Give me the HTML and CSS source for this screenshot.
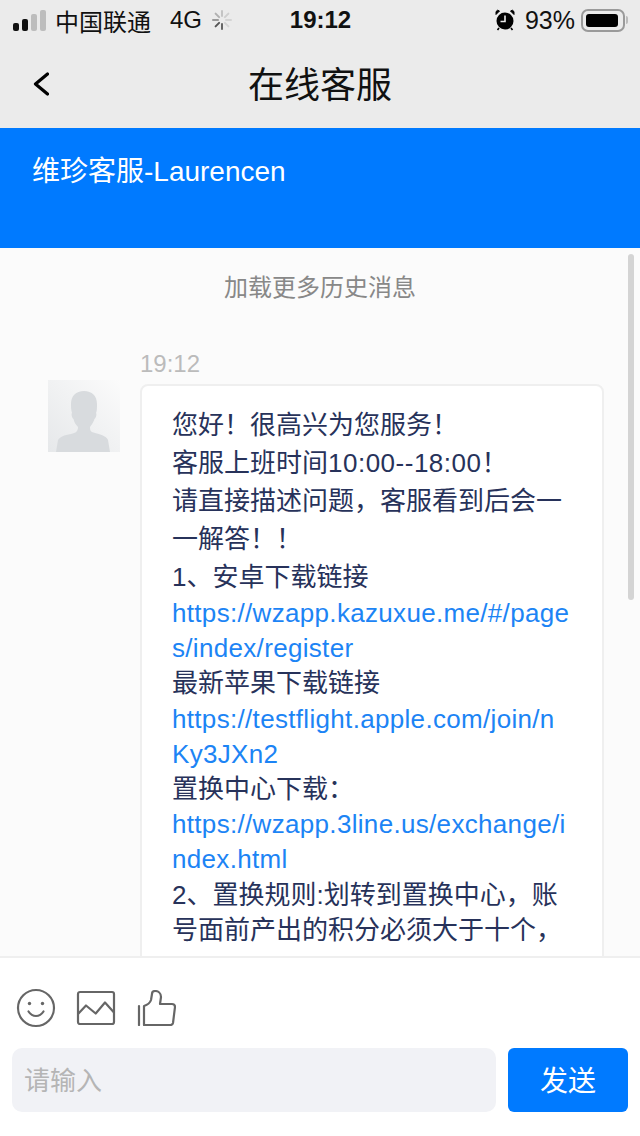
FILE: index.html
```html
<!DOCTYPE html>
<html lang="zh">
  <head>
    <meta charset="utf-8" />
    <meta name="viewport" content="width=device-width, initial-scale=1" />
    <title>在线客服</title>
    <link rel="stylesheet" href="styles.css">
  </head>
  <body>
    <div class="status-bar">
      <div class="status-left">
        <div class="signal">
          <i class="bar b1"></i><i class="bar b2"></i><i class="bar b3 off"></i><i class="bar b4 off"></i>
        </div>
        <span class="carrier">中国联通</span>
        <span class="net">4G</span>
        <svg class="spinner" width="20" height="20" viewBox="0 0 20 20" fill="none" stroke-width="2" stroke-linecap="round">
          <path d="M10 1v5" stroke="#c4c4c4"/>
          <path d="M16.4 3.6l-3.5 3.5" stroke="#cfcfcf"/>
          <path d="M19 10h-5" stroke="#d4d4d4"/>
          <path d="M16.4 16.4l-3.5-3.5" stroke="#d4d4d4"/>
          <path d="M10 19v-5" stroke="#666"/>
          <path d="M3.6 16.4l3.5-3.5" stroke="#555"/>
          <path d="M1 10h5" stroke="#999"/>
          <path d="M3.6 3.6l3.5 3.5" stroke="#b0b0b0"/>
        </svg>
      </div>
      <div class="status-time">19:12</div>
      <div class="status-right">
        <svg class="alarm" width="20" height="22" viewBox="0 0 20 22">
          <circle cx="10" cy="12" r="8.5" fill="#000"/>
          <path d="M10 6.5V12.5H5.5" fill="none" stroke="#ebebeb" stroke-width="1.6"/>
          <path d="M1 5.5 4.5 2 2.6 1.2 1 2.6ZM19 5.5 15.500 2 17.400 1.200 19 2.600Z" fill="#000" stroke="#000"/>
          <path d="M4 19l-1.500 2M16 19l1.500 2" stroke="#000" stroke-width="1.600"/>
        </svg>
        <span class="battery-pct">93%</span>
        <div class="battery"><div class="battery-fill"></div></div>
        <div class="battery-cap"></div>
      </div>
    </div>

    <header class="nav">
      <svg class="back" width="16" height="24" viewBox="0 0 16 24" fill="none" stroke="#000" stroke-width="3.200" stroke-linecap="round" stroke-linejoin="round">
        <path d="M14.500 2 2.500 12 14.500 22"/>
      </svg>
      <h1 class="nav-title">在线客服</h1>
    </header>

    <div class="agent-bar">维珍客服-Laurencen</div>

    <main class="chat">
      <div class="scrollbar"></div>
      <div class="load-more">加载更多历史消息</div>
      <div class="msg-time">19:12</div>
      <div class="msg">
        <div class="avatar">
          <svg width="72" height="72" viewBox="0 0 72 72">
            <defs>
              <linearGradient id="avatar-bg" x1="1" y1="0" x2="0" y2="1">
                <stop offset="0" stop-color="#fbfbfb"/>
                <stop offset="1" stop-color="#e6e8ea"/>
              </linearGradient>
            </defs>
            <rect width="72" height="72" fill="url(#avatar-bg)"/>
            <path d="M36 11c8 0 13 5 13 13 0 3 0 7-1 9 1 1 0 5-1.500 6-1 3-3 6-4.500 8 0 4 1 5 5 6 8 2 12 4 13 7l2 12H8l2-12c2-3 6-5 13-6 5-1 7-3 7-7-2-2-4-5-4.500-8-1.500-1-2.500-5-1.500-6-1-3-1-6-1-9 0-8 5-13 13-13Z" fill="#d8dbde"/>
          </svg>
        </div>
        <div class="bubble">
          <p class="cn">您好！很高兴为您服务！</p>
          <p class="cn">客服上班时间<span class="latin">10:00--18:00</span>！</p>
          <p class="cn">请直接描述问题，客服看到后会一一解答！！</p>
          <p class="cn">1、安卓下载链接</p>
          <p class="en"><a href="#">https://wzapp.kazuxue.me/#/pages/index/register</a></p>
          <p class="en">最新苹果下载链接</p>
          <p class="en"><a href="#">https://testflight.apple.com/join/nKy3JXn2</a></p>
          <p class="en">置换中心下载：</p>
          <p class="en"><a href="#">https://wzapp.3line.us/exchange/index.html</a></p>
          <p class="en">2、置换规则:划转到置换中心，账号面前产出的积分必须大于十个，</p>
        </div>
      </div>
    </main>

    <footer class="composer">
      <div class="tools">
        <svg width="40" height="40" viewBox="0 0 40 40" fill="none" stroke="#666" stroke-width="2.200" stroke-linecap="round">
          <circle cx="20" cy="20" r="18"/>
          <circle cx="13.500" cy="15.500" r="1.700" fill="#666" stroke="none"/>
          <circle cx="26.500" cy="15.500" r="1.700" fill="#666" stroke="none"/>
          <path d="M12.500 23.500c2 3 4.500 4.500 7.500 4.500s5.500-1.500 7.500-4.500"/>
        </svg>
        <svg width="40" height="36" viewBox="0 0 40 36" fill="none" stroke="#666" stroke-width="2.200" stroke-linejoin="round">
          <rect x="2" y="2" width="36" height="32" rx="2"/>
          <path d="M2 24 10 15.500l9.700 8L29 12.500 38 22.500"/>
        </svg>
        <svg width="40" height="36" viewBox="0 0 40 36" fill="none" stroke="#666" stroke-width="2.200" stroke-linejoin="round" stroke-linecap="round">
          <path d="M3 16v19"/>
          <path d="M8 35V16c3-1 6-3 7-6l1-6c0-2 1-3 3-3 3 0 6 2 6 6l-1 7H36c2 0 3 1.500 3 3L37 33c-.3 1.500-1 2-2.500 2Z"/>
        </svg>
      </div>
      <div class="input-row">
        <div class="input">请输入</div>
        <div class="send">发送</div>
      </div>
    </footer>
  </body>
</html>
```

FILE: styles.css
```css
* {
  margin: 0;
  padding: 0;
  box-sizing: border-box;
}

html,
body {
  height: 100%;
}

body {
  display: flex;
  flex-direction: column;
  height: 1136px;
  overflow: hidden;
  background: #fff;
  font-family: "Liberation Sans", "Noto Sans CJK SC", sans-serif;
}

.status-bar {
  display: flex;
  align-items: center;
  justify-content: space-between;
  height: 40px;
  padding: 0 12px 0 13px;
  background: #ebebeb;
  color: #111;
  font-size: 24px;
}

.status-left,
.status-right {
  display: flex;
  align-items: center;
  width: 230px;
}

.status-right {
  justify-content: flex-end;
}

.signal {
  display: flex;
  align-items: flex-end;
  gap: 3px;
  height: 22px;
  margin-right: 9px;
}

.bar {
  display: block;
  width: 6px;
  background: #111;
  border-radius: 2px;
}

.b1 { height: 8px; }
.b2 { height: 12px; }
.b3 { height: 17px; }
.b4 { height: 21px; }

.bar.off {
  background: #bdbdbd;
}

.net {
  margin: 0 10px 0 19px;
}

.status-time {
  font-weight: 700;
  font-size: 24px;
}

.alarm {
  margin-right: 10px;
}

.battery-pct {
  font-size: 25px;
}

.battery {
  width: 44px;
  height: 23px;
  margin-left: 6px;
  padding: 3px;
  border: 2px solid #9a9a9a;
  border-radius: 7px;
}

.battery-fill {
  width: 94%;
  height: 100%;
  background: #000;
  border-radius: 3px;
}

.battery-cap {
  width: 2px;
  height: 8px;
  margin-left: 1px;
  background: #bbb;
  border-radius: 0 2px 2px 0;
}

.nav {
  position: relative;
  display: flex;
  align-items: center;
  justify-content: center;
  height: 88px;
  padding-bottom: 4px;
  background: #ebebeb;
}

.back {
  position: absolute;
  left: 33px;
  top: 32px;
}

.nav-title {
  font-size: 36px;
  font-weight: 400;
  color: #111;
}

.agent-bar {
  height: 120px;
  padding: 25px 32px 0;
  background: #007aff;
  color: #fff;
  font-size: 28px;
  line-height: 38px;
}

.chat {
  position: relative;
  flex: 1;
  min-height: 0;
  overflow: hidden;
  background: #fbfbfb;
}

.scrollbar {
  position: absolute;
  top: 6px;
  right: 6px;
  width: 6px;
  height: 346px;
  background: #d4d4d4;
  border-radius: 3px;
}

.load-more {
  padding-top: 22px;
  text-align: center;
  color: #888;
  font-size: 24px;
  line-height: 36px;
}

.msg-time {
  margin: 42px 0 0 140px;
  color: #bbb;
  font-size: 24px;
  line-height: 32px;
}

.msg {
  display: flex;
  align-items: flex-start;
  margin: 0 36px 0 48px;
  gap: 20px;
}

.avatar {
  flex: none;
  width: 72px;
  height: 72px;
}

.avatar svg {
  display: block;
}

.bubble {
  flex: 1;
  min-width: 0;
  margin-top: 4px;
  padding: 20px 30px 60px;
  background: #fff;
  border: 2px solid #efefef;
  border-radius: 8px;
  color: #27325a;
  font-size: 26px;
  word-break: break-all;
}

.cn {
  line-height: 38px;
}

.en {
  line-height: 35.200px;
}

.latin {
  letter-spacing: 0.5px;
}

.en a {
  color: #1c84f5;
  letter-spacing: 0.32px;
  text-decoration: none;
}

.composer {
  flex: none;
  height: 180px;
  padding: 0 12px;
  background: #fff;
  border-top: 2px solid #efefef;
}

.tools {
  display: flex;
  align-items: center;
  gap: 20px;
  height: 90px;
  padding: 11px 0 1px 4px;
}

.input-row {
  display: flex;
  gap: 12px;
}

.input {
  flex: 1;
  height: 64px;
  padding-left: 12px;
  background: #f1f2f6;
  border-radius: 10px;
  color: #b5b5b5;
  font-size: 26px;
  line-height: 67px;
}

.send {
  flex: none;
  width: 120px;
  height: 64px;
  background: #007aff;
  border-radius: 6px;
  color: #fff;
  font-size: 28px;
  line-height: 67px;
  text-align: center;
}
```
